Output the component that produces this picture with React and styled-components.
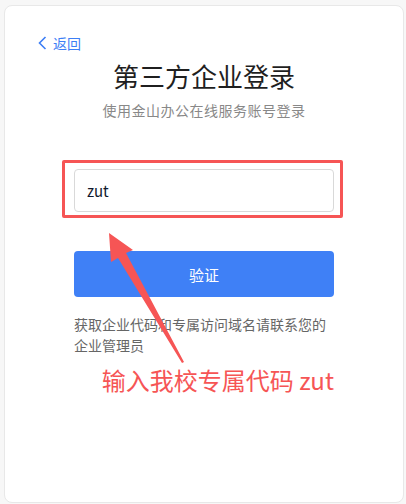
import React from 'react';
import styled, { createGlobalStyle } from 'styled-components';

const GlobalStyle = createGlobalStyle`
  html, body {
    margin: 0;
    padding: 0;
    background: #f7f7f7;
  }
  body {
    font-family: 'Noto Sans CJK SC', 'Noto Sans', sans-serif;
  }
`;

const Page = styled.div`
  padding: 5px 2px 0 4px;
  box-sizing: border-box;
  height: 504px;
`;

const Card = styled.div`
  position: relative;
  box-sizing: border-box;
  height: 498px;
  background: #fff;
  border: 1px solid #e8e8e8;
  border-radius: 8px;
  padding: 25px 33px 0;
`;

const BackLink = styled.a`
  display: inline-flex;
  align-items: center;
  gap: 6px;
  color: #3d7ef5;
  font-size: 14px;
  line-height: 20px;
  cursor: pointer;
`;

const Title = styled.h1`
  margin: 3px 0 0;
  text-align: center;
  font-size: 26px;
  font-weight: 400;
  line-height: 36px;
  color: #1f1f1f;
`;

const Subtitle = styled.p`
  margin: 5px 0 0;
  text-align: center;
  font-size: 14px;
  letter-spacing: 0.5px;
  line-height: 22px;
  color: #888;
`;

const Form = styled.div`
  width: 260px;
  margin: 48px auto 0;
`;

const InputWrap = styled.div`
  position: relative;
`;

const Highlight = styled.div`
  position: absolute;
  top: -9px;
  left: -12px;
  right: -9px;
  bottom: -6px;
  border: 3px solid #f65555;
  border-radius: 2px;
  pointer-events: none;
`;

const Input = styled.input`
  display: block;
  box-sizing: border-box;
  width: 100%;
  height: 43px;
  padding: 0 12px;
  border: 1px solid #d9d9d9;
  border-radius: 4px;
  font-family: inherit;
  font-size: 15px;
  color: #111a2e;
  outline: none;
`;

const Button = styled.button`
  display: block;
  width: 100%;
  height: 46px;
  margin-top: 39px;
  border: 0;
  border-radius: 4px;
  background: #3f80f6;
  color: #fff;
  font-family: inherit;
  font-size: 15px;
  cursor: pointer;
`;

const Help = styled.p`
  margin: 17px 0 0;
  font-size: 14px;
  line-height: 21px;
  color: #666;
`;

const Note = styled.p`
  margin: 8px 0 0;
  text-align: right;
  font-size: 24px;
  line-height: 32px;
  color: #f65555;
`;

const Arrow = styled.svg`
  position: absolute;
  left: 96px;
  top: 222px;
  pointer-events: none;
`;

const App = () => (
  <>
    <GlobalStyle />
    <Page>
      <Card>
        <BackLink>
          <svg width="9" height="14" viewBox="0 0 9 14">
            <path d="M7.5 1 L1.5 7 L7.5 13" fill="none" stroke="#3d7ef5" strokeWidth="1.6" />
          </svg>
          返回
        </BackLink>
        <Title>第三方企业登录</Title>
        <Subtitle>使用金山办公在线服务账号登录</Subtitle>
        <Form>
          <InputWrap>
            <Input defaultValue="zut" />
            <Highlight />
          </InputWrap>
          <Button>验证</Button>
          <Help>获取企业代码和专属访问域名请联系您的企业管理员</Help>
          <Note>输入我校专属代码 zut</Note>
        </Form>
        <Arrow width="92" height="145" viewBox="0 0 92 145">
          <polygon
            points="8,5 32,22 25,25 83,134 81,135 17,30 10,34"
            fill="#f65555"
          />
        </Arrow>
      </Card>
    </Page>
  </>
);

export default App;
